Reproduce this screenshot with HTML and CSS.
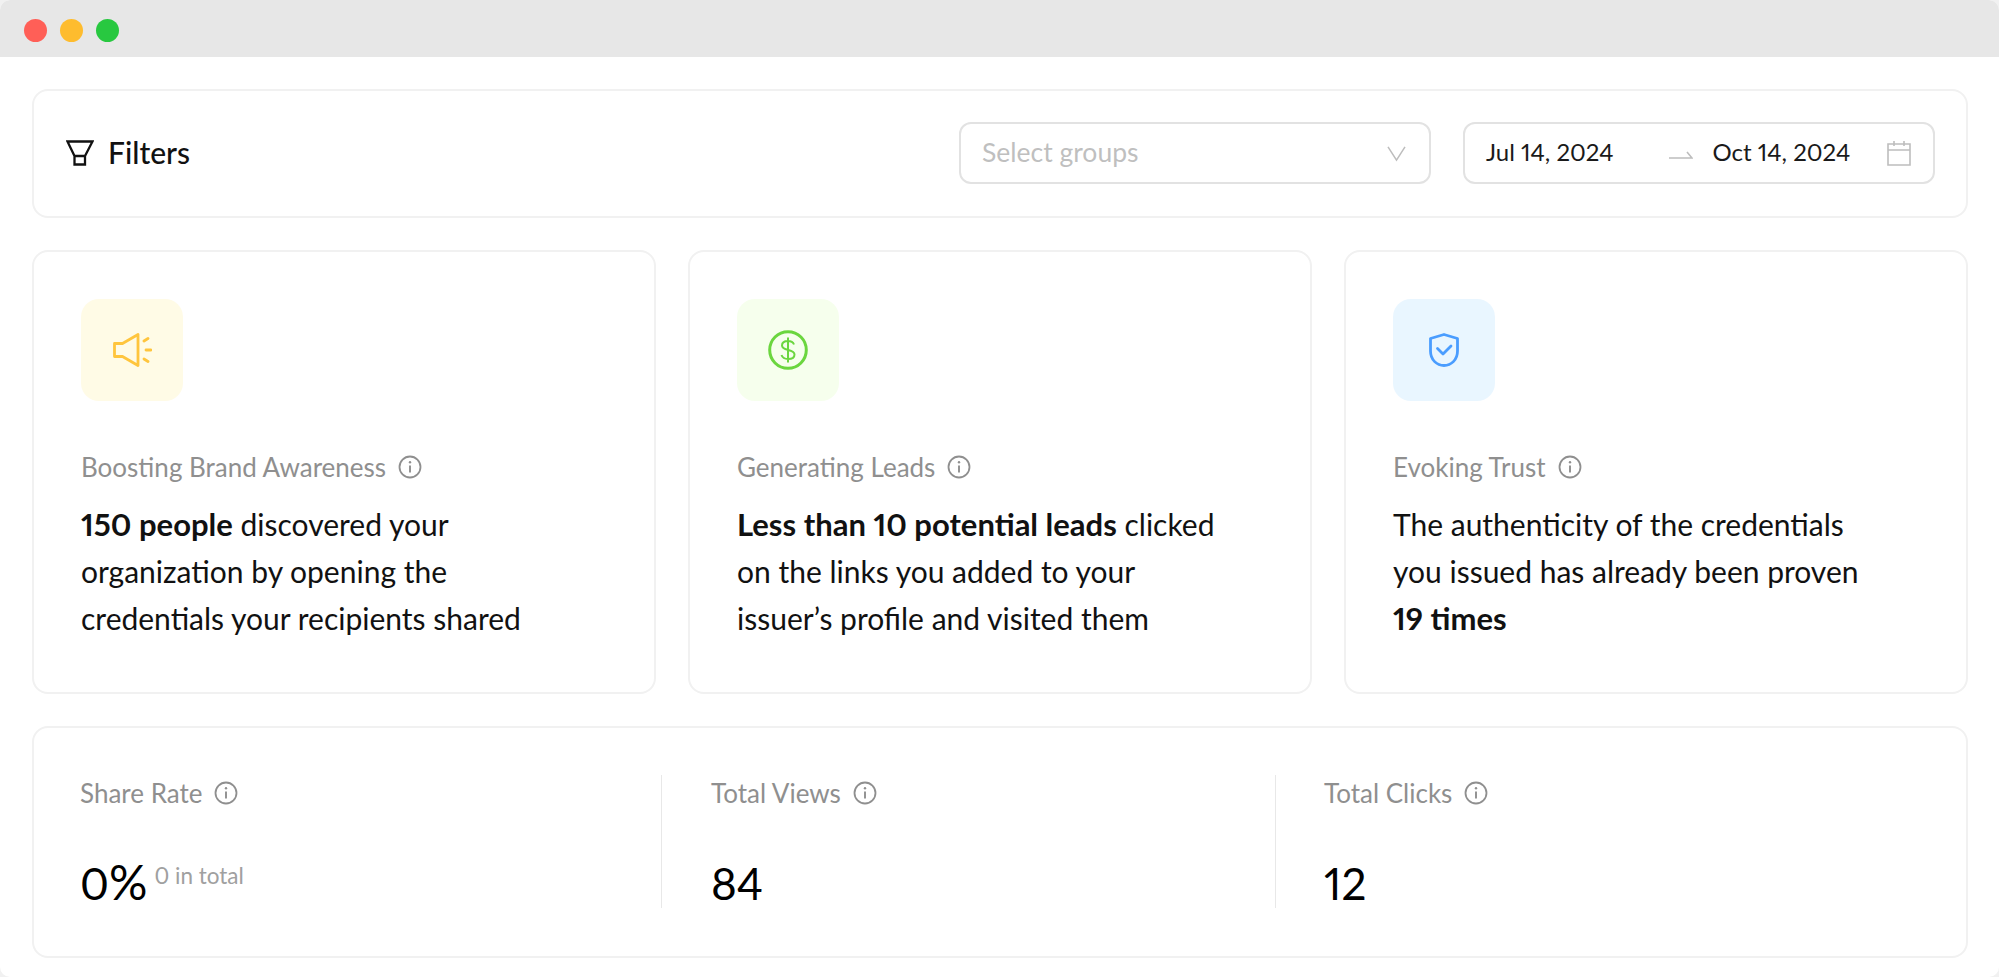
FILE: index.html
```html
<!DOCTYPE html>
<html lang="en">
<head>
<meta charset="utf-8">
<title>Analytics</title>
<link rel="stylesheet" href="styles.css">
</head>
<body>
<div class="window">
  <header class="titlebar">
    <span class="dot dot-red"></span>
    <span class="dot dot-yellow"></span>
    <span class="dot dot-green"></span>
  </header>
  <main class="content">
    <section class="card filters">
      <div class="filters-title">
        <svg class="filter-icon" viewBox="0 0 28 26" fill="none" stroke="#111" stroke-width="2.300"><path d="M1.500 1.500h25L19 16v8.500H8.500V16zM8.500 16H19"/></svg>
        <span>Filters</span>
      </div>
      <div class="filters-controls">
        <div class="control select">
          <span class="placeholder">Select groups</span>
          <svg class="chevron" viewBox="0 0 22 18" fill="none" stroke="#bdbdbd" stroke-width="1.6"><path d="M2 2l9 14 9-14"/></svg>
        </div>
        <div class="control date">
          <span class="date-val">Jul 14, 2024</span>
          <svg class="arrow" viewBox="0 0 24 10" fill="none" stroke="#bdbdbd" stroke-width="1.6"><path d="M0 8h23l-5-6"/></svg>
          <span class="date-val">Oct 14, 2024</span>
          <svg class="calendar" viewBox="0 0 24 26" fill="none" stroke="#bdbdbd" stroke-width="1.6"><path d="M1 4h22v21H1zM1 10h22M7 1v5M17 1v5"/></svg>
        </div>
      </div>
    </section>

    <section class="insights">
      <article class="card insight">
        <div class="badge badge-yellow">
          <svg class="icon-speaker" viewBox="0 0 39 34" fill="none" stroke="#ffc53d" stroke-width="2.800" stroke-linecap="round" stroke-linejoin="round"><path d="M1.500 10.500h8L25 1.500v31L9.500 23.500h-8zM31 8l4-2.500M33 17h5M31 26l4 2.500"/></svg>
        </div>
        <div class="label"><span>Boosting Brand Awareness</span><svg class="info" viewBox="0 0 24 24"><use href="#info"/></svg></div>
        <p class="text"><b>150 people</b> discovered your organization by opening the credentials your recipients shared</p>
      </article>
      <article class="card insight">
        <div class="badge badge-green">
          <svg class="icon-dollar" viewBox="0 0 40 40" fill="none" stroke="#6bd63f"><circle cx="20" cy="20" r="18.300" stroke-width="3"/><path d="M26 14.500c-1-2.600-3.200-3.500-6-3.500-3.500 0-6 1.700-6 4.500 0 6 12.500 3 12.500 9 0 3-2.800 4.500-6.500 4.500-3 0-5.500-1.200-6.500-4M20 7.500v25" stroke-width="2"/></svg>
        </div>
        <div class="label"><span>Generating Leads</span><svg class="info" viewBox="0 0 24 24"><use href="#info"/></svg></div>
        <p class="text"><b>Less than 10 potential leads</b> clicked on the links you added to your issuer’s profile and visited them</p>
      </article>
      <article class="card insight">
        <div class="badge badge-blue">
          <svg class="icon-shield" viewBox="0 0 30 34" fill="none" stroke="#4a9dff" stroke-width="2.800" stroke-linecap="round" stroke-linejoin="round"><path d="M15 1.500L28.500 5.500V18c0 9-6.500 14.500-13.500 14.500S1.500 27 1.500 18V5.500z"/><path d="M8.500 15.500l5.500 5.500 8-8"/></svg>
        </div>
        <div class="label"><span>Evoking Trust</span><svg class="info" viewBox="0 0 24 24"><use href="#info"/></svg></div>
        <p class="text">The authenticity of the credentials you issued has already been proven <b>19 times</b></p>
      </article>
    </section>

    <section class="card stats">
      <div class="stat">
        <div class="label"><span>Share Rate</span><svg class="info" viewBox="0 0 24 24"><use href="#info"/></svg></div>
        <div class="value">0<span class="percent">%</span><small class="value-note">0 in total</small></div>
      </div>
      <div class="stat">
        <div class="label"><span>Total Views</span><svg class="info" viewBox="0 0 24 24"><use href="#info"/></svg></div>
        <div class="value">84</div>
      </div>
      <div class="stat">
        <div class="label"><span>Total Clicks</span><svg class="info" viewBox="0 0 24 24"><use href="#info"/></svg></div>
        <div class="value">12</div>
      </div>
    </section>
  </main>
</div>
<svg class="defs" aria-hidden="true">
  <symbol id="info" viewBox="0 0 24 24">
    <circle cx="12" cy="12" r="10.500" fill="none" stroke="#8f8f8f" stroke-width="1.800"/>
    <path d="M12 10.500v7" stroke="#8f8f8f" stroke-width="1.900" fill="none"/>
    <circle cx="12" cy="7.300" r="1.200" fill="#8f8f8f"/>
  </symbol>
</svg>
</body>
</html>
```
FILE: styles.css
```css
* { box-sizing: border-box; }
html, body { margin: 0; height: 100%; background: #f1f1f1; overflow: hidden; }
body { font-family: Lato, "Noto Sans", sans-serif; color: #111; font-variant-numeric: proportional-nums; }
.defs { width: 0; height: 0; position: absolute; }
.window { height: 977px; display: flex; flex-direction: column; background: #fff; border-radius: 10px; overflow: hidden; }
.titlebar { height: 57px; background: #e7e7e7; display: flex; align-items: center; gap: 13px; padding: 3px 0 0 24px; flex: none; }
.dot { width: 23px; height: 23px; border-radius: 50%; }
.dot-red { background: #ff5f57; }
.dot-yellow { background: #febc2e; }
.dot-green { background: #28c840; }
.content { padding: 32px 31px 0 32px; display: flex; flex-direction: column; gap: 32px; }
.card { background: #fff; border: 2px solid #f1f1f1; border-radius: 16px; }
.filters { display: flex; align-items: center; justify-content: space-between; padding: 31px 31px 32px 32px; }
.filters-title { display: flex; align-items: center; gap: 14px; font-size: 30px; line-height: 34px; font-weight: 500; color: #111; }
.filters-title span { margin-top: -2px; }
.filter-icon { width: 28px; height: 26px; }
.filters-controls { display: flex; gap: 32px; }
.control { width: 472px; height: 62px; border: 2px solid #e2e2e2; border-radius: 12px; display: flex; align-items: center; }
.select { justify-content: space-between; padding: 0 22px 0 21px; }
.placeholder { font-size: 26.500px; line-height: 34px; margin-top: -3px; color: #bfbfbf; }
.chevron { width: 21px; height: 17px; }
.date { padding: 0 22px 0 21px; }
.date-val { font-size: 24px; line-height: 34px; margin-top: -3px; color: #1a1a1a; }
.arrow { width: 24px; height: 10px; margin: 4px 20px 0 55px; }
.calendar { width: 24px; height: 26px; margin-left: auto; }
.insights { display: grid; grid-template-columns: repeat(3, 1fr); gap: 32px; }
.insight { height: 444px; padding: 47px 46px 0 47px; }
.badge { width: 102px; height: 102px; border-radius: 18px; display: flex; align-items: center; justify-content: center; }
.badge-yellow { background: #fffbe6; }
.badge-green { background: #f6ffed; }
.badge-blue { background: #e9f6ff; }
.icon-speaker { width: 39px; height: 34px; }
.icon-dollar { width: 40px; height: 40px; }
.icon-shield { width: 30px; height: 34px; }
.label { display: flex; align-items: center; gap: 12px; font-size: 26px; color: #8f8f8f; line-height: 34px; }
.info { width: 24px; height: 24px; }
.insight .label { margin-top: 49px; }
.text { margin: 17px 0 0; max-width: 490px; font-size: 30px; line-height: 47px; color: #111; }
.text b { font-weight: 700; font-size: 31px; line-height: 1; }
.stats { height: 232px; padding: 47px 46px; display: grid; grid-template-columns: 581px 614px 1fr; }
.stat { padding-left: 49px; border-left: 1px solid #e8e8e8; height: 133px; }
.stat:first-child { padding-left: 0; border-left: 0; }
.stat:last-child { padding-left: 48px; }
.stat .label { margin-top: 1px; }
.value { margin-top: 45px; font-size: 44px; line-height: 56px; color: #000; }
.percent { font-size: 48px; line-height: 1; }
.value-note { font-size: 22.500px; color: #a0a0a0; margin-left: 7px; vertical-align: 16px; line-height: 1; }
```
